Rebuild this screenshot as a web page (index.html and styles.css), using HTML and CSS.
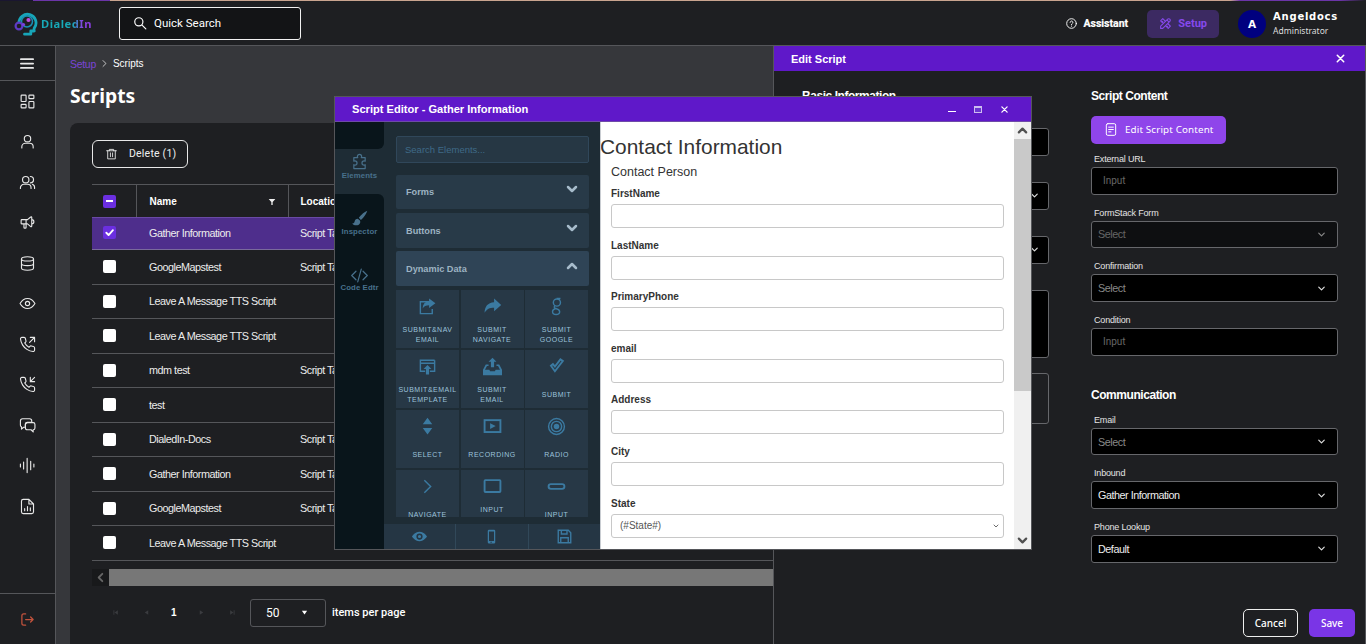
FILE: index.html
```html
<!DOCTYPE html>
<html lang="en">
<head>
    <meta charset="UTF-8">
    <meta name="viewport" content="width=device-width, initial-scale=1.0">
    <title>DialedIn - Scripts</title>
    <link rel="stylesheet" href="styles.css">
</head>
<body>
    <svg class="defs" aria-hidden="true">
        <symbol id="chev" viewBox="0 0 24 24"><path d="M6 9l6 6 6-6" fill="none" stroke="currentColor" stroke-width="2.6"/></symbol>
        <symbol id="chev-fat" viewBox="0 0 24 24"><path d="M4 8l8 8 8-8" fill="none" stroke="currentColor" stroke-width="5"/></symbol>
        <symbol id="check" viewBox="0 0 24 24"><path d="M5 12.5l5 5L19.5 7" fill="none" stroke="currentColor" stroke-width="4"/></symbol>
        <symbol id="close" viewBox="0 0 24 24"><path d="M5 5l14 14M19 5L5 19" fill="none" stroke="currentColor" stroke-width="3.4"/></symbol>
    </svg>

    <div class="stripe"></div>

    <header class="topbar">
        <a class="logo">
            <svg class="logo-mark" viewBox="0 0 24 24">
                <path d="M5 11a8.5 8.5 0 1 1 15.5 4.6c-.8 1.2-.6 2-.3 3.4h-3.400v3.200h-6.300" fill="none" stroke="#17a5b8" stroke-width="2.800"/>
                <circle cx="13" cy="9.500" r="5.500" fill="#1e1f22" stroke="#1a8fb5" stroke-width="1.500"/>
                <circle cx="5" cy="14" r="3.400" fill="#1e1f22" stroke="#5d3bc4" stroke-width="2.200"/>
                <circle cx="14.500" cy="8" r="2.100" fill="#c04fe0"/>
                <circle cx="9.500" cy="12.500" r="1.600" fill="#7b3fe0"/>
            </svg>
            <span class="logo-text">DialedIn</span>
        </a>
        <div class="search">
            <svg class="ico-15" viewBox="0 0 24 24"><circle cx="10" cy="10" r="7"/><path d="M15.500 15.500L22 22"/></svg>
            <span>Quick Search</span>
        </div>
        <div class="top-right">
            <div class="assistant">
                <svg class="ico-11" viewBox="0 0 24 24"><circle cx="12" cy="12" r="10.500"/><path d="M9 9.500a3 3 0 1 1 4.500 2.600c-1 .6-1.500 1.200-1.500 2.400M12 17.500v.5"/></svg>
                <span>Assistant</span>
            </div>
            <div class="setup">
                <svg class="ico-12" viewBox="0 0 24 24"><path d="M3 21h4l13-13a1.500 1.500 0 0 0-4-4l-13 13v4M14.500 5.500l4 4M12 8L7 3 3 7l5 5M7 8L5.500 9.500M16 12l5 5-4 4-5-5M16 17l-1.500 1.500"/></svg>
                <span>Setup</span>
            </div>
            <div class="avatar">A</div>
            <div class="who">
                <div class="who-name">Angeldocs</div>
                <div class="who-role">Administrator</div>
            </div>
        </div>
    </header>

    <div class="main">
        <nav class="sidebar">
            <div class="burger">
                <svg class="ico-16" viewBox="0 0 16 12"><path d="M1 1h14M1 6h14M1 11h14"/></svg>
            </div>
            <div class="nav-items">
                <svg viewBox="0 0 24 24"><rect x="3" y="3" width="7" height="9" rx="1"/><rect x="14" y="3" width="7" height="5" rx="1"/><rect x="14" y="12" width="7" height="9" rx="1"/><rect x="3" y="16" width="7" height="5" rx="1"/></svg>
                <svg viewBox="0 0 24 24"><circle cx="12" cy="8" r="4.500"/><path d="M4 21v-1.500a5 5 0 0 1 5-5h6a5 5 0 0 1 5 5V21"/></svg>
                <svg viewBox="0 0 24 24"><circle cx="9.500" cy="8" r="4.500"/><path d="M2 20.500v-1a5 5 0 0 1 5-5h5a5 5 0 0 1 5 5v1M16 3.500a4.500 4.500 0 0 1 0 9M19 14.500a5 5 0 0 1 3 5v1"/></svg>
                <svg viewBox="0 0 24 24"><path d="M18 8a3 3 0 0 1 0 6M10 8v11a1 1 0 0 1-1 1H8a1 1 0 0 1-1-1v-5M12 8l4.500-3.800a.9.900 0 0 1 1.500.7v12.200a.9.900 0 0 1-1.500.7L12 14H4a1 1 0 0 1-1-1V9a1 1 0 0 1 1-1h8"/></svg>
                <svg viewBox="0 0 24 24"><ellipse cx="12" cy="5.500" rx="8.500" ry="3"/><path d="M3.500 5.500v13c0 1.700 3.800 3 8.500 3s8.500-1.300 8.500-3v-13M3.500 12c0 1.700 3.800 3 8.500 3s8.500-1.300 8.500-3"/></svg>
                <svg viewBox="0 0 24 24"><path d="M1.500 12S5.500 5 12 5s10.500 7 10.500 7-4 7-10.500 7S1.500 12 1.500 12z"/><circle cx="12" cy="12" r="3"/></svg>
                <svg viewBox="0 0 24 24"><path d="M22 16.920v3a2 2 0 0 1-2.180 2 19.790 19.790 0 0 1-8.630-3.070 19.500 19.500 0 0 1-6-6 19.790 19.790 0 0 1-3.070-8.670A2 2 0 0 1 4.110 2h3a2 2 0 0 1 2 1.720c.1.960.3 1.900.7 2.810a2 2 0 0 1-.45 2.110L8.090 9.910a16 16 0 0 0 6 6l1.270-1.270a2 2 0 0 1 2.110-.45c.9.400 1.850.600 2.810.7A2 2 0 0 1 22 16.920zM16 2h6v6M22 2l-7 7"/></svg>
                <svg viewBox="0 0 24 24"><path d="M22 16.920v3a2 2 0 0 1-2.180 2 19.790 19.790 0 0 1-8.630-3.070 19.500 19.500 0 0 1-6-6 19.790 19.790 0 0 1-3.070-8.670A2 2 0 0 1 4.110 2h3a2 2 0 0 1 2 1.720c.1.960.3 1.900.7 2.810a2 2 0 0 1-.45 2.110L8.090 9.910a16 16 0 0 0 6 6l1.270-1.270a2 2 0 0 1 2.110-.45c.9.400 1.850.600 2.810.7A2 2 0 0 1 22 16.920zM16 2v6h6M22 2l-6 6"/></svg>
                <svg viewBox="0 0 24 24"><path d="M5 2.500h10a3 3 0 0 1 3 3v2H12a3 3 0 0 0-3 3v4H6.500L3.500 17v-3.200A2.500 2.500 0 0 1 2 11.500v-6a3 3 0 0 1 3-3z"/><path d="M12 8h8a2.500 2.500 0 0 1 2.500 2.500v5A2.500 2.500 0 0 1 20 18v3l-3-3h-5a3 3 0 0 1-3-3v-4a3 3 0 0 1 3-3z"/></svg>
                <svg viewBox="0 0 24 24"><path d="M2 10v4M6.500 7v10M11.500 2v20M16.500 6v12M21 10v4"/></svg>
                <svg viewBox="0 0 24 24"><path d="M14 2H6a2.500 2.500 0 0 0-2.500 2.500v15A2.500 2.500 0 0 0 6 22h12a2.500 2.500 0 0 0 2.500-2.500V8.500zM14 2v6.500h6.500M8 18v-3M12 18v-6M16 18v-4"/></svg>
            </div>
            <div class="logout">
                <svg viewBox="0 0 24 24"><path d="M9 3H6a3 3 0 0 0-3 3v12a3 3 0 0 0 3 3h3M9 12h12M17 8l4 4-4 4"/></svg>
            </div>
        </nav>

        <main class="content">
            <div class="crumbs">
                <span class="crumb-link">Setup</span>
                <svg viewBox="0 0 24 24"><path d="M7 2l10 10-10 10"/></svg>
                <span>Scripts</span>
            </div>
            <h1>Scripts</h1>

            <section class="card">
                <button class="btn-delete">
                    <svg viewBox="0 0 24 24"><path d="M3 6h18M8 6V3.500h8V6M5 6v15h14V6M10 10v7M14 10v7"/></svg>
                    <span>Delete (1)</span>
                </button>

                <table class="grid">
                    <thead>
                        <tr>
                            <th class="col-check"><span class="box box-on"><i class="minus"></i></span></th>
                            <th class="col-name">Name <svg class="funnel" viewBox="0 0 24 24"><path d="M2 3h20l-8 9v9h-4v-9z"/></svg></th>
                            <th class="col-loc">Location</th>
                            <th>Type</th>
                        </tr>
                    </thead>
                    <tbody>
                        <tr class="selected">
                            <td class="col-check"><span class="box box-on"><svg><use href="#check"/></svg></span></td>
                            <td>Gather Information</td><td>Script Task</td><td></td>
                        </tr>
                        <tr><td class="col-check"><span class="box"></span></td><td>GoogleMapstest</td><td>Script Task</td><td></td></tr>
                        <tr><td class="col-check"><span class="box"></span></td><td>Leave A Message TTS Script</td><td></td><td></td></tr>
                        <tr><td class="col-check"><span class="box"></span></td><td>Leave A Message TTS Script</td><td></td><td></td></tr>
                        <tr><td class="col-check"><span class="box"></span></td><td>mdm test</td><td>Script Task</td><td></td></tr>
                        <tr><td class="col-check"><span class="box"></span></td><td>test</td><td></td><td></td></tr>
                        <tr><td class="col-check"><span class="box"></span></td><td>DialedIn-Docs</td><td>Script Task</td><td></td></tr>
                        <tr><td class="col-check"><span class="box"></span></td><td>Gather Information</td><td>Script Task</td><td></td></tr>
                        <tr><td class="col-check"><span class="box"></span></td><td>GoogleMapstest</td><td>Script Task</td><td></td></tr>
                        <tr><td class="col-check"><span class="box"></span></td><td>Leave A Message TTS Script</td><td></td><td></td></tr>
                    </tbody>
                </table>

                <div class="hscroll">
                    <div class="hscroll-btn"><svg viewBox="0 0 24 24"><path d="M16 4l-8 8 8 8"/></svg></div>
                    <div class="hscroll-thumb"></div>
                </div>

                <div class="pager">
                    <svg class="pg pg-first" viewBox="0 0 24 24"><path d="M5 4h3v16H5zM20 4v16L9 12z"/></svg>
                    <svg class="pg pg-prev" viewBox="0 0 24 24"><path d="M18 4v16L6 12z"/></svg>
                    <span class="pg-num">1</span>
                    <svg class="pg pg-next" viewBox="0 0 24 24"><path d="M6 4v16l12-8z"/></svg>
                    <svg class="pg pg-last" viewBox="0 0 24 24"><path d="M16 4h3v16h-3zM4 4v16l11-8z"/></svg>
                    <div class="pg-size"><span>50</span><svg viewBox="0 0 24 24"><path d="M3 6h18l-9 13z"/></svg></div>
                    <span class="pg-label">items per page</span>
                </div>
            </section>
        </main>
    </div>

    <!-- panneau Edit Script -->
    <aside class="drawer">
        <div class="drawer-head">
            <span>Edit Script</span>
            <svg class="head-x"><use href="#close"/></svg>
        </div>
        <div class="drawer-body">
            <div class="drawer-col left-col">
                <h3>Basic Information</h3>
                <div class="field-l"><label>Name</label><div class="inp"></div></div>
                <div class="field-l"><label>Type</label><div class="inp inp-sel"><svg><use href="#chev"/></svg></div></div>
                <div class="field-l"><label>Location</label><div class="inp inp-sel"><svg><use href="#chev"/></svg></div></div>
                <div class="field-l"><label>Description</label><div class="inp inp-area"></div></div>
                <div class="inp inp-plain"></div>
            </div>
            <div class="drawer-col">
                <h3>Script Content</h3>
                <button class="btn-edit">
                    <svg viewBox="0 0 24 24"><rect x="4" y="2" width="16" height="20" rx="2.500"/><path d="M8 8h8M8 12h8M8 16h4"/></svg>
                    <span>Edit Script Content</span>
                </button>
                <div class="field"><label>External URL</label><div class="inp inp-input">Input</div></div>
                <div class="field"><label>FormStack Form</label><div class="inp inp-sel off"><span>Select</span><svg><use href="#chev"/></svg></div></div>
                <div class="field"><label>Confirmation</label><div class="inp inp-sel"><span>Select</span><svg><use href="#chev"/></svg></div></div>
                <div class="field"><label>Condition</label><div class="inp inp-input">Input</div></div>
                <h3 class="comm">Communication</h3>
                <div class="field"><label>Email</label><div class="inp inp-sel"><span>Select</span><svg><use href="#chev"/></svg></div></div>
                <div class="field"><label>Inbound</label><div class="inp inp-sel filled"><span>Gather Information</span><svg><use href="#chev"/></svg></div></div>
                <div class="field"><label>Phone Lookup</label><div class="inp inp-sel filled"><span>Default</span><svg><use href="#chev"/></svg></div></div>
            </div>
        </div>
        <div class="drawer-foot">
            <button class="btn-cancel">Cancel</button>
            <button class="btn-save">Save</button>
        </div>
    </aside>

    <!-- fenetre Script Editor -->
    <div class="editor">
        <div class="editor-head">
            <span class="editor-title">Script Editor - Gather Information</span>
            <span class="win-min"></span>
            <span class="win-max"></span>
            <svg class="win-x"><use href="#close"/></svg>
        </div>
        <div class="editor-body">
            <div class="rail">
                <div class="rail-top"></div>
                <div class="rail-tab active">
                    <svg viewBox="0 0 24 24" class="outline"><path d="M9 5a3 3 0 1 1 6 0c0 .7-.3 1.200-.5 1.500H20v5c-.5-.3-1-.5-1.500-.5a3 3 0 1 0 0 6c.5 0 1-.2 1.500-.5V22H4v-5.500c.5.300 1 .5 1.500.5a3 3 0 1 0 0-6c-.5 0-1 .2-1.500.5v-5h5.500C9.300 6.200 9 5.700 9 5z"/></svg>
                    <span>Elements</span>
                </div>
                <div class="rail-rest">
                    <div class="rail-tab">
                        <svg viewBox="0 0 24 24"><path d="M23 1c-3 1-9 5.500-12 10l3 3c4-3 8-9.500 9-13zM9.500 12.500c-2.500 0-4 1.500-4.500 4-.3 1.500-1.500 2.500-3.500 2.500 2 2.500 6 3.500 9 2 2.500-1.300 3.500-4.500 1.800-6.500z" class="solid"/></svg>
                        <span>Inspector</span>
                    </div>
                    <div class="rail-tab tab-code">
                        <svg viewBox="0 0 24 24" class="outline"><path d="M7 6l-6 6 6 6M17 6l6 6-6 6M14.500 3l-5 18"/></svg>
                        <span>Code Edtr</span>
                    </div>
                </div>
            </div>

            <div class="palette">
                <div class="pal-search">Search Elements...</div>
                <div class="acc acc-forms"><span>Forms</span><svg><use href="#chev-fat"/></svg></div>
                <div class="acc acc-buttons"><span>Buttons</span><svg><use href="#chev-fat"/></svg></div>
                <div class="acc acc-open"><span>Dynamic Data</span><svg class="flip"><use href="#chev-fat"/></svg></div>
                <div class="tiles-wrap">
                    <div class="tiles">
                        <div class="tile">
                            <svg viewBox="0 0 24 24"><path class="ln" d="M14 6H3v15h15v-6"/><path d="M14 2l8 6-8 6v-3.500c-4 0-6.500 1-8 4 0-5 3-9 8-9z"/></svg>
                            <span>Submit&amp;Nav<br>Email</span>
                        </div>
                        <div class="tile">
                            <svg viewBox="0 0 24 24"><path d="M14 2l9 8-9 8v-4.500c-6 0-9 1.500-12 6.500 0-8 4-13 12-13.500z"/></svg>
                            <span>Submit<br>Navigate</span>
                        </div>
                        <div class="tile">
                            <svg viewBox="0 0 24 24"><path class="ln" d="M12 2h5M12.500 2.500a4 4 0 0 1 0 9 4 4 0 0 1 0-9zM10 11c-1.500 1.500-1 3 1 3.500 3.500 1 5 2 5 4s-2 3.500-4.500 3.500S7 20.500 7 18.500s2-3.500 5-4"/></svg>
                            <span>Submit<br>Google</span>
                        </div>
                        <div class="tile">
                            <svg viewBox="0 0 24 24"><path class="ln" d="M21 4H3v14h6M15 18h6V4M3 8h18"/><path d="M12 10l5 5h-3v7h-4v-7H7z"/></svg>
                            <span>Submit&amp;Email<br>Template</span>
                        </div>
                        <div class="tile">
                            <svg viewBox="0 0 24 24"><path d="M12 1l5 5h-3v7h-4V6H7zM7 9.500v2H5L2.500 16H8l1 2h6l1-2h5.500L19 11.500h-2v-2h3.500L24 16v7H0v-7l3.500-6.500z"/></svg>
                            <span>Submit<br>Email</span>
                        </div>
                        <div class="tile">
                            <svg viewBox="0 0 24 24"><path class="ln wide" d="M5 11l5 7L20 5l-3-2-7 9-2.500-3z"/></svg>
                            <span>Submit</span>
                        </div>
                        <div class="tile">
                            <svg viewBox="0 0 24 24"><path d="M12 1l6 8H6zM6 14h12l-6 8z"/></svg>
                            <span>Select</span>
                        </div>
                        <div class="tile">
                            <svg viewBox="0 0 24 24"><rect class="ln wide" x="2" y="4" width="20" height="15"/><path d="M9 8l7 3.500L9 15z"/></svg>
                            <span>Recording</span>
                        </div>
                        <div class="tile">
                            <svg viewBox="0 0 24 24"><circle class="ln" cx="12" cy="12" r="10"/><circle class="ln" cx="12" cy="12" r="6.500"/><circle cx="12" cy="12" r="3.500"/></svg>
                            <span>Radio</span>
                        </div>
                        <div class="tile">
                            <svg viewBox="0 0 24 24"><path class="ln" d="M8 4l8 8-8 8"/></svg>
                            <span>Navigate</span>
                        </div>
                        <div class="tile tile-up">
                            <svg viewBox="0 0 24 24"><rect class="ln wide" x="2" y="4" width="20" height="15" rx="1"/></svg>
                            <span>Input</span>
                        </div>
                        <div class="tile">
                            <svg viewBox="0 0 24 24"><rect class="ln wide" x="2" y="9" width="20" height="6" rx="3"/></svg>
                            <span>Input</span>
                        </div>
                    </div>
                </div>
                <div class="pal-foot">
                    <div class="pal-btn"><svg viewBox="0 0 24 24"><path d="M0 12s4.500-7.500 12-7.500S24 12 24 12s-4.500 7.500-12 7.500S0 12 0 12zm12 5a5 5 0 1 0 0-10 5 5 0 0 0 0 10zm0-2.500a2.500 2.500 0 1 1 0-5 2.500 2.500 0 0 1 0 5z" fill-rule="evenodd"/></svg></div>
                    <div class="pal-btn"><svg viewBox="0 0 24 24"><path d="M8 1h8a2 2 0 0 1 2 2v18a2 2 0 0 1-2 2H8a2 2 0 0 1-2-2V3a2 2 0 0 1 2-2zm0 3v15h8V4zm4 16.500a1 1 0 1 0 0 1.500 1 1 0 0 0 0-1.500z" fill-rule="evenodd"/></svg></div>
                    <div class="pal-btn"><svg viewBox="0 0 24 24"><path class="ln wide" d="M2 2h16l4 4v16H2zM7 2v6h9V2M6 22v-8h12v8"/></svg></div>
                </div>
            </div>

            <div class="sheet">
                <div class="sheet-form">
                    <h2>Contact Information</h2>
                    <div class="sheet-fields">
                        <h4>Contact Person</h4>
                        <div class="f"><label>FirstName</label><div class="f-box"></div></div>
                        <div class="f"><label>LastName</label><div class="f-box"></div></div>
                        <div class="f"><label>PrimaryPhone</label><div class="f-box"></div></div>
                        <div class="f"><label>email</label><div class="f-box"></div></div>
                        <div class="f"><label>Address</label><div class="f-box"></div></div>
                        <div class="f"><label>City</label><div class="f-box"></div></div>
                        <div class="f"><label>State</label><div class="f-box f-sel"><span>(#State#)</span><svg><use href="#chev"/></svg></div></div>
                    </div>
                </div>
                <div class="vscroll">
                    <div class="vs-btn vs-up"><svg class="flip"><use href="#chev-fat"/></svg></div>
                    <div class="vs-thumb"></div>
                    <div class="vs-track"></div>
                    <div class="vs-btn"><svg><use href="#chev-fat"/></svg></div>
                </div>
            </div>
        </div>
    </div>
</body>
</html>
```

FILE: styles.css
```css
:root {
    --bg-dark: #1e1f22;
    --bg-page: #36373b;
    --line: #55565a;
    --purple-head: #5f18c9;
    --purple: #8f45ea;
    --ed-panel: #1e2c35;
    --ed-dark: #09151b;
    --ed-tile: #273846;
    --ed-blue: #3b7aa1;
    --ed-text: #9cc2da;
}

* {
    box-sizing: border-box;
}

html, body {
    height: 100%;
}

body {
    margin: 0;
    position: relative;
    display: flex;
    flex-direction: column;
    overflow: hidden;
    background: var(--bg-dark);
    color: #fff;
    font-family: "Liberation Sans", Arial, sans-serif;
    font-size: 11px;
}

svg {
    display: block;
    flex: none;
    fill: none;
    stroke: currentColor;
    stroke-width: 2;
    stroke-linecap: round;
    stroke-linejoin: round;
}

button {
    font-family: inherit;
    padding: 0;
    cursor: pointer;
}

.defs {
    position: absolute;
    width: 0;
    height: 0;
}

.stripe {
    height: 1px;
    flex: none;
    background: linear-gradient(90deg, #1a1630 0 33px, #6b35a8 33px 110px, #c9a48f 110px 900px, #c9a48f 1230px, #6b35a8 1240px 1340px, #1e1f22 1366px);
}

/* Top bar */
.topbar {
    height: 45px;
    flex: none;
    display: flex;
    align-items: center;
    padding: 1px 28px 0 14px;
    background: var(--bg-dark);
    border-bottom: 1px solid var(--line);
}

.logo {
    display: flex;
    align-items: center;
    gap: 3px;
    width: 105px;
}

.logo-mark {
    width: 24px;
    height: 24px;
    stroke: none;
}

.logo-text {
    font-family: "Noto Sans", sans-serif;
    font-weight: 700;
    font-size: 11.200px;
    letter-spacing: .5px;
    background: linear-gradient(90deg, #17a9b8 62%, #8a3fe0 82%);
    -webkit-background-clip: text;
    background-clip: text;
    color: transparent;
}

.search {
    width: 182px;
    height: 33px;
    display: flex;
    align-items: center;
    gap: 7px;
    padding: 0 0 1px 13px;
    border: 1px solid #f2f2f2;
    border-radius: 3px;
    background: #131416;
    font-family: Roboto, sans-serif;
    font-size: 11.500px;
}

.ico-15 {
    width: 14px;
    height: 14px;
}

.ico-11 {
    width: 11px;
    height: 11px;
}

.ico-12 {
    width: 13px;
    height: 13px;
}

.ico-16 {
    width: 14px;
    height: 11px;
    margin-right: 1px;
}

.top-right {
    margin-left: auto;
    display: flex;
    align-items: center;
}

.assistant {
    display: flex;
    align-items: center;
    gap: 6px;
    font-family: Roboto, sans-serif;
    font-weight: 700;
    font-size: 10.500px;
    -webkit-text-stroke: .2px #fff;
}

.setup {
    width: 72px;
    height: 28px;
    margin: 0 19px;
    display: flex;
    align-items: center;
    justify-content: center;
    gap: 6px;
    border-radius: 5px;
    background: #3c2a62;
    color: #8649ec;
    font-family: Roboto, sans-serif;
    font-weight: 700;
    font-size: 11px;
}

.avatar {
    width: 28px;
    height: 28px;
    border-radius: 50%;
    background: #00007f;
    display: flex;
    align-items: center;
    justify-content: center;
    font-family: "DejaVu Sans", sans-serif;
    font-weight: 700;
    font-size: 10.500px;
}

.who {
    margin-left: 7px;
}

.who-name {
    font-family: "DejaVu Sans", sans-serif;
    font-weight: 700;
    font-size: 10px;
    letter-spacing: .75px;
    line-height: 13px;
}

.who-role {
    margin-top: 2px;
    font-family: "Noto Sans", sans-serif;
    font-size: 8.500px;
    line-height: 12px;
    color: #ddd;
}

/* Layout */
.main {
    flex: 1;
    min-height: 0;
    display: flex;
}

.sidebar {
    width: 56px;
    flex: none;
    display: flex;
    flex-direction: column;
    background: var(--bg-dark);
    border-right: 1px solid var(--line);
    color: #e8e8e8;
}

.burger {
    height: 35px;
    display: flex;
    align-items: center;
    justify-content: center;
    border-bottom: 1px solid var(--line);
}

.nav-items {
    flex: 1;
    padding: 11.500px 1px 0 0;
    display: flex;
    flex-direction: column;
    align-items: center;
    gap: 23.500px;
}

.nav-items svg {
    width: 17px;
    height: 17px;
    stroke-width: 1.600;
}

.logout {
    height: 51px;
    padding: 18px 1px 0 0;
    display: flex;
    justify-content: center;
    border-top: 1px solid var(--line);
    color: #c2533d;
}

.logout svg {
    width: 15px;
    height: 15px;
}

.content {
    flex: 1;
    min-width: 0;
    display: flex;
    flex-direction: column;
    padding: 11px 0 0 14px;
    background: var(--bg-page);
}

.crumbs {
    display: flex;
    align-items: center;
    gap: 5px;
    height: 13px;
    font-size: 10px;
}

.crumbs svg {
    width: 7px;
    height: 11px;
    stroke-width: 2.400;
}

.crumb-link {
    color: #7a45d6;
    font-size: 10.500px;
    letter-spacing: -.3px;
}

h1 {
    margin: 11px 0 0;
    height: 33px;
    font-family: "Noto Sans", sans-serif;
    font-size: 19.300px;
    line-height: 29px;
    font-weight: 700;
}

.card {
    flex: 1;
    margin-top: 9px;
    padding: 17px 0 0 22px;
    background: var(--bg-dark);
    border-radius: 8px 0 0 0;
}

.btn-delete {
    width: 96px;
    height: 28px;
    display: flex;
    align-items: center;
    gap: 11px;
    padding: 0 0 1px 12px;
    background: transparent;
    color: #eee;
    border: 1px solid #e8e8e8;
    border-radius: 6px;
    font-family: Roboto, sans-serif;
    font-size: 10.500px;
    letter-spacing: .2px;
}

.btn-delete svg {
    width: 13px;
    height: 14px;
    stroke-width: 1.600;
}

/* Table */
.grid {
    width: 1200px;
    margin-top: 16px;
    border-collapse: collapse;
    table-layout: fixed;
    border-top: 1px solid var(--line);
}

.grid th, .grid td {
    padding: 0 0 0 12px;
    text-align: left;
    font-size: 10.800px;
    letter-spacing: -.47px;
    white-space: nowrap;
    overflow: hidden;
}

.grid th:nth-child(2), .grid td:nth-child(2) {
    padding-left: 13px;
}

.grid th {
    height: 33px;
    font-weight: 700;
    font-size: 10px;
    letter-spacing: 0;
    border-left: 1px solid var(--line);
    border-bottom: 1px solid #6a4aa5;
}

.grid th:first-child {
    border-left: 0;
}

.grid td {
    height: 34.500px;
    border-bottom: 1px solid var(--line);
    color: #ececec;
}

.grid .selected td {
    height: 32px;
    padding-bottom: 2px;
    background: #4e2e8c;
    border-bottom-color: #7a6a9c;
}

.col-check {
    width: 44px;
}

.grid .col-check {
    padding-left: 11px;
}

.col-name {
    width: 152px;
    position: relative;
}

.col-loc {
    width: 200px;
}

.funnel {
    position: absolute;
    right: 12px;
    top: 13px;
    width: 8px;
    height: 8px;
    fill: #eee;
    stroke: none;
}

.box {
    display: flex;
    align-items: center;
    justify-content: center;
    width: 13px;
    height: 13px;
    background: #fff;
    border-radius: 2px;
}

.box-on {
    background: #6b2fe0;
}

.box svg {
    width: 11px;
    height: 11px;
    color: #fff;
}

.minus {
    width: 7px;
    height: 2px;
    background: #fff;
}

.hscroll {
    height: 17px;
    margin-top: 8px;
    display: flex;
}

.hscroll-btn {
    width: 17px;
    background: #18191b;
    display: flex;
    align-items: center;
    justify-content: center;
    color: #666;
}

.hscroll-btn svg {
    width: 11px;
    height: 11px;
    stroke-width: 4;
}

.hscroll-thumb {
    flex: 1;
    background: #777;
}

.pager {
    display: flex;
    align-items: center;
    height: 28px;
    margin-top: 13px;
    font-size: 11px;
    color: #fff;
}

.pg {
    width: 7px;
    height: 7px;
    fill: #3a3b3f;
    stroke: none;
}

.pg-first {
    margin-left: 20px;
}

.pg-prev {
    margin-left: 24px;
}

.pg-num {
    width: 7px;
    margin-left: 21px;
    font-size: 10px;
    font-weight: 700;
}

.pg-next {
    margin-left: 20px;
}

.pg-last {
    margin-left: 24px;
}

.pg-size {
    width: 76px;
    height: 28px;
    margin-left: 14px;
    display: flex;
    align-items: center;
    justify-content: space-between;
    padding: 0 17px 0 15px;
    border: 1px solid var(--line);
    border-radius: 3px;
    font-size: 12px;
    font-family: Roboto, sans-serif;
}

.pg-size svg {
    width: 7px;
    height: 7px;
    fill: #fff;
    stroke: none;
}

.pg-label {
    margin-left: 6px;
    font-family: Roboto, sans-serif;
    font-size: 11px;
    font-weight: 500;
}

/* Edit Script drawer */
.drawer {
    position: absolute;
    left: 773px;
    top: 46px;
    right: 0;
    bottom: 0;
    display: flex;
    flex-direction: column;
    background: var(--bg-dark);
    border-left: 1px solid var(--line);
    border-right: 1px solid var(--line);
}

.drawer-head {
    height: 25px;
    flex: none;
    display: flex;
    align-items: center;
    justify-content: space-between;
    padding: 0 19px 0 17px;
    background: var(--purple-head);
    font-weight: 700;
    font-size: 11px;
}

.head-x {
    width: 11px;
    height: 11px;
}

.drawer-body {
    flex: 1;
    display: grid;
    grid-template-columns: 247px 247px;
    column-gap: 42px;
    padding: 18px 0 0 28px;
}

.drawer-col {
    display: flex;
    flex-direction: column;
}

h3 {
    margin: 0;
    height: 14px;
    line-height: 15px;
    font-size: 12px;
    letter-spacing: -.45px;
    font-weight: 700;
}

.btn-edit {
    width: 135px;
    height: 28px;
    margin-top: 13px;
    display: flex;
    align-items: center;
    gap: 7px;
    padding: 0 0 1px 13px;
    background: var(--purple);
    color: #fff;
    border: 0;
    border-radius: 5px;
    font-family: "Noto Sans", sans-serif;
    font-size: 9.800px;
    letter-spacing: .15px;
}

.btn-edit svg {
    width: 14px;
    height: 15px;
    stroke-width: 1.700;
}

.field {
    margin-bottom: 12.200px;
}

.btn-edit + .field {
    margin-top: 9px;
}

.field label, .field-l label {
    display: block;
    height: 14px;
    line-height: 12px;
    padding-left: 3px;
    font-size: 9px;
    letter-spacing: -.18px;
    color: #e4e4e4;
}

.inp {
    height: 27.500px;
    background: #000;
    border: 1px solid #66676b;
    border-radius: 3px;
    display: flex;
    align-items: center;
    font-size: 10.800px;
    letter-spacing: -.47px;
}

.inp-input {
    padding-left: 11px;
    color: #666;
    font-family: Roboto, sans-serif;
    font-size: 10px;
    letter-spacing: 0;
}

.inp-sel {
    padding: 0 10px 0 6px;
    color: #888;
}

.inp-sel svg {
    width: 11px;
    height: 11px;
    margin-left: auto;
    color: #ddd;
}

.inp-sel.off {
    background: #0e0f11;
    color: #666;
}

.inp-sel.off svg {
    color: #888;
}

.inp-sel.filled {
    color: #eee;
}

.comm {
    margin: 20px 0 12px;
}

.left-col h3 {
    margin-bottom: 11px;
}

.field-l {
    margin-bottom: 12.500px;
}

.inp-area {
    height: 68px;
}

.inp-plain {
    height: 51px;
    background: transparent;
    margin-top: 2px;
}

.left-col .inp-sel {
    padding-right: 8px;
}

.drawer-foot {
    flex: none;
    display: flex;
    justify-content: flex-end;
    gap: 11px;
    padding: 0 10px 7px 0;
}

.btn-cancel, .btn-save {
    height: 28px;
    border-radius: 5px;
    font-family: "Noto Sans", sans-serif;
    font-size: 10px;
    font-weight: 500;
    color: #fff;
}

.btn-cancel {
    width: 55px;
    background: transparent;
    border: 1px solid #eee;
}

.btn-save {
    width: 46px;
    background: #7a35e6;
    border: 0;
}

/* Script Editor window */
.editor {
    position: absolute;
    left: 334px;
    top: 96px;
    width: 698px;
    height: 454px;
    display: flex;
    flex-direction: column;
    border: 1px solid var(--line);
    background: #fff;
}

.editor-head {
    height: 25px;
    flex: none;
    display: flex;
    align-items: center;
    padding: 0 22px 0 17px;
    background: var(--purple-head);
    border-bottom: 1px solid #6e4aa8;
}

.editor-title {
    flex: 1;
    font-weight: 700;
    font-size: 11.100px;
}

.win-min {
    width: 8px;
    height: 1.500px;
    margin-top: 5px;
    background: #fff;
}

.win-max {
    width: 8px;
    height: 7px;
    margin-left: 18px;
    border: 1px solid #cdbcf0;
    border-top-width: 2px;
    background: #6a35d0;
}

.win-x {
    width: 9px;
    height: 9px;
    margin-left: 18px;
}

.editor-body {
    flex: 1;
    min-height: 0;
    display: flex;
}

.rail {
    width: 49px;
    flex: none;
    display: flex;
    flex-direction: column;
    background: var(--ed-panel);
    color: #48708b;
}

.rail-top {
    height: 27px;
    background: var(--ed-dark);
    border-radius: 0 0 6px 0;
}

.rail-rest {
    flex: 1;
    padding-top: 12px;
    background: var(--ed-dark);
    border-radius: 0 6px 0 0;
}

.rail-tab {
    height: 45px;
    padding-top: 4px;
    display: flex;
    flex-direction: column;
    align-items: center;
    font-size: 7.800px;
    font-weight: 700;
    letter-spacing: .1px;
    line-height: 11px;
}

.rail-tab svg {
    width: 17px;
    height: 17px;
    margin-bottom: -1px;
}

.rail-tab.active span {
    margin-top: 1px;
}

.rail-tab .solid {
    fill: currentColor;
    stroke: none;
}

.outline {
    stroke-width: 1.700;
}

.tab-code {
    margin-top: 12px;
}

.tab-code span {
    margin-top: -1px;
}

.palette {
    width: 216px;
    flex: none;
    display: flex;
    flex-direction: column;
    padding: 14px 0 0 12px;
    background: var(--ed-panel);
}

.pal-search {
    width: 193px;
    height: 27px;
    display: flex;
    align-items: center;
    padding-left: 8px;
    background: #263744;
    border: 1px solid #30475a;
    border-radius: 2px;
    color: #3f6a87;
    font-size: 9.500px;
}

.acc {
    width: 193px;
    display: flex;
    align-items: center;
    justify-content: space-between;
    padding: 0 11px 0 10px;
    background: #283a48;
    border-radius: 2px;
    color: #9db3c2;
    font-size: 9.200px;
    font-weight: 700;
}

.acc svg {
    width: 12px;
    height: 12px;
    margin-top: -5px;
    color: #a7bccb;
}

.acc-forms {
    height: 34px;
    margin-top: 12px;
    padding-bottom: 1px;
}

.acc-buttons {
    height: 35px;
    margin-top: 4px;
}

.acc-open {
    height: 35px;
    margin-top: 3px;
    background: #2f4456;
}

.flip {
    transform: rotate(180deg);
}

.tiles-wrap {
    width: 192px;
    height: 227px;
    margin-top: 4px;
    overflow: hidden;
}

.tiles {
    display: grid;
    grid-template-columns: repeat(3, 63px);
    grid-auto-rows: 58px;
    gap: 2px 1.500px;
}

.tile {
    position: relative;
    padding-top: 6px;
    background: var(--ed-tile);
    display: flex;
    flex-direction: column;
    align-items: center;
    color: var(--ed-blue);
}

.tile svg {
    width: 19px;
    height: 21px;
    fill: currentColor;
    stroke: none;
}

.tile .ln {
    fill: none;
    stroke: currentColor;
    stroke-width: 1.800;
    stroke-linecap: butt;
    stroke-linejoin: miter;
}

.tile .wide {
    stroke-width: 2.400;
}

.tile span {
    height: 24px;
    margin-top: 6px;
    display: flex;
    align-items: center;
    text-align: center;
    font-size: 7px;
    font-weight: 400;
    line-height: 10px;
    letter-spacing: .5px;
    text-transform: uppercase;
    color: var(--ed-text);
}

.tile-up span {
    margin-top: 1px;
}

.pal-foot {
    height: 25px;
    margin: 7px 0 0 -12px;
    display: flex;
    background: #253644;
}

.pal-btn {
    flex: 1;
    display: flex;
    align-items: center;
    justify-content: center;
    border-left: 1px solid #314859;
    color: var(--ed-blue);
}

.pal-btn:first-child {
    border-left: 0;
}

.pal-btn svg {
    width: 17px;
    height: 15px;
    fill: currentColor;
    stroke: none;
}

.pal-btn .ln {
    fill: none;
    stroke: currentColor;
    stroke-width: 2.200;
    stroke-linecap: butt;
    stroke-linejoin: miter;
}

.sheet {
    flex: 1;
    min-width: 0;
    display: flex;
    background: #fff;
    color: #333;
    border-left: 1px solid #c9cdd2;
}

.sheet-form {
    flex: 1;
    min-width: 0;
    overflow: hidden;
}

h2 {
    margin: 12px 0 0 -1px;
    height: 26px;
    line-height: 26px;
    font-size: 20.900px;
    font-weight: 400;
}

.sheet-fields {
    padding: 0 10px;
}

h4 {
    margin: 3px 0 1px;
    height: 18px;
    line-height: 18px;
    font-size: 12.500px;
    font-weight: 400;
}

.f {
    height: 51.600px;
}

.f label {
    display: block;
    height: 22px;
    padding-top: 5px;
    line-height: 13px;
    font-size: 10px;
    font-weight: 700;
}

.f-box {
    height: 24px;
    border: 1px solid #c8c8c8;
    border-radius: 3px;
    background: #fff;
}

.f-sel {
    display: flex;
    align-items: center;
    justify-content: space-between;
    padding: 0 3px 0 8px;
    font-size: 10px;
    color: #555;
}

.f-sel svg {
    width: 8px;
    height: 8px;
}

.vscroll {
    width: 17px;
    flex: none;
    display: flex;
    flex-direction: column;
    background: #f0f0f0;
}

.vs-btn {
    height: 17px;
    display: flex;
    align-items: center;
    justify-content: center;
    color: #505050;
}

.vs-btn svg {
    width: 11px;
    height: 11px;
}

.vs-thumb {
    height: 252px;
    background: #c9c9c9;
}

.vs-track {
    flex: 1;
}
```
